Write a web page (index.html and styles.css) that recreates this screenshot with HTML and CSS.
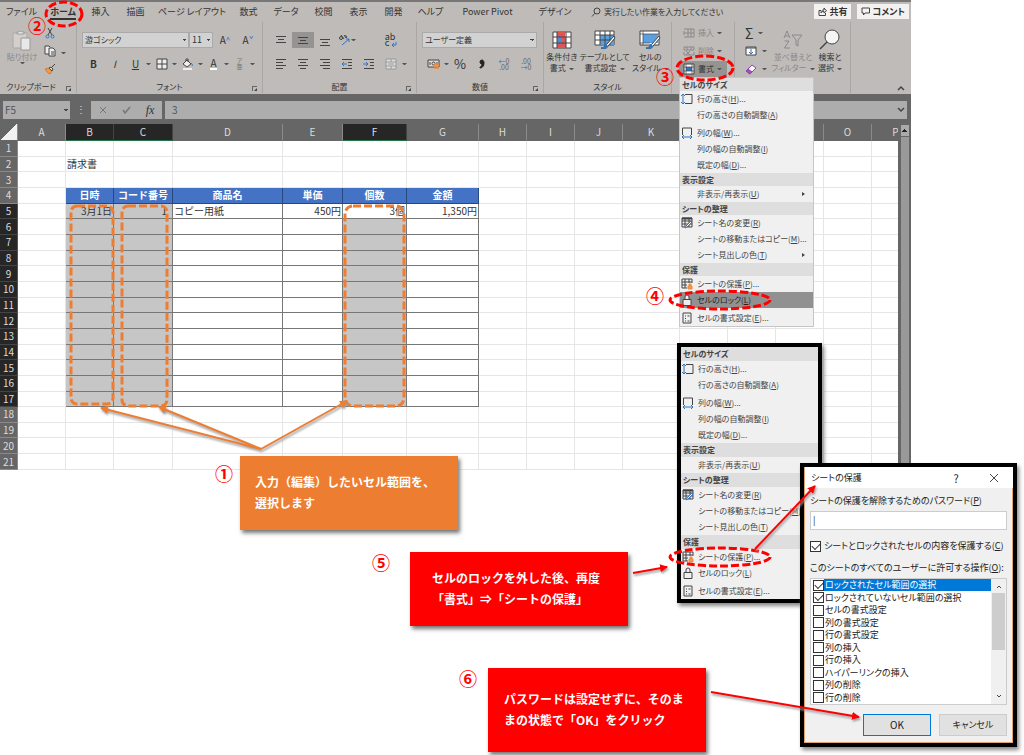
FILE: index.html
```html
<!DOCTYPE html>
<html lang="ja">
  <head>
    <meta charset="UTF-8" />
    <meta name="viewport" content="width=device-width, initial-scale=1.0" />
    <title>シートの保護</title>
    <link rel="stylesheet" href="styles.css">
  </head>
  <body>
    <main class="page">
      <section class="excel">
        <header class="tabs">
          <nav class="tab-list">
            <button type="button">ファイル</button>
            <button type="button" class="active"><span>ホーム</span></button>
            <button type="button">挿入</button>
            <button type="button">描画</button>
            <button type="button">ページ レイアウト</button>
            <button type="button">数式</button>
            <button type="button">データ</button>
            <button type="button">校閲</button>
            <button type="button">表示</button>
            <button type="button">開発</button>
            <button type="button">ヘルプ</button>
            <button type="button">Power Pivot</button>
            <button type="button">デザイン</button>
          </nav>
          <button type="button" class="tell-me">
            <svg width="10" height="10" viewBox="0 0 10 10"><circle cx="6" cy="4" r="3" /><path d="M4 6.2L1 9.5" /></svg>
            実行したい作業を入力してください
          </button>
          <div class="tab-actions">
            <button type="button">
              <svg width="9" height="9" viewBox="0 0 9 9"><path d="M3 3.5H1v5h6.500V6M3 6c0-2 1-3 3-3V1l2.500 2.800L6 6V4.300C4.500 4.300 3.500 5 3 6z" /></svg>
              共有
            </button>
            <button type="button">
              <svg width="9" height="9" viewBox="0 0 9 9"><path d="M1 1h7.500v5H4L2.500 8V6H1z" /></svg>
              コメント
            </button>
          </div>
        </header>

        <div class="ribbon">
          <div class="group clipboard">
            <div class="group-body">
              <button type="button" class="big off">
                <svg width="22" height="22" viewBox="0 0 22 22"><path d="M2 4h14v15H2z" fill="#d2cfcc" stroke="#aaa" /><path d="M6 5V3h2a2 2 0 0 1 3 0h2v2z" fill="#eee" stroke="#999" /><path d="M10 9h9v12h-9z" fill="#e8e8e8" stroke="#999" /></svg>
                <span>貼り付け</span><i class="caret"></i>
              </button>
              <div class="stack">
                <button type="button" class="slot" aria-label="切り取り"><svg width="10" height="12" viewBox="0 0 10 12"><path d="M3 1l4 7M7 1L3 8" /><circle class="blue" cx="2.500" cy="9.500" r="1.500" /><circle class="blue" cx="7.500" cy="9.500" r="1.500" /></svg></button>
                <button type="button" class="slot" aria-label="コピー"><svg width="12" height="12" viewBox="0 0 12 12"><path d="M5 9H1V1h4l1 1M5 3h4l2 2v6H5zM7 7h3M7 9h3" fill="#eee" /></svg></button>
                <button type="button" class="slot" aria-label="書式のコピー"><svg width="12" height="12" viewBox="0 0 12 12"><path d="M1 6l4-1 3 3-2 3-2-1z" fill="#ed9a4c" stroke="#d87b2f" /><path d="M5 5l3 3 1-2-2-2zM8 4l3-3" fill="#ddd" /></svg></button>
              </div>
              <i class="caret"></i>
            </div>
            <div class="group-label">クリップボード<i class="launcher"></i></div>
          </div>

          <div class="group font">
            <div class="group-body rows">
              <div class="row">
                <select class="font-name" aria-label="フォント"><option>游ゴシック</option></select>
                <select class="font-size" aria-label="フォント サイズ"><option>11</option></select>
                <button type="button" class="slot grow">A<sup>^</sup></button>
                <button type="button" class="slot grow">A<sup>ˇ</sup></button>
              </div>
              <div class="row">
                <button type="button" class="slot"><b>B</b></button>
                <button type="button" class="slot"><em>I</em></button>
                <button type="button" class="slot"><u>U</u></button><i class="caret"></i>
                <button type="button" class="slot" aria-label="罫線"><svg width="12" height="12" viewBox="0 0 12 12"><path d="M1 1h10v10H1zM6 1v10M1 6h10" fill="#eee" /></svg></button><i class="caret"></i>
                <button type="button" class="slot" aria-label="塗りつぶし"><svg width="12" height="12" viewBox="0 0 12 12"><path d="M1 6l4-4 4 4-4 3zM4 3V1h2v3" fill="#eee" /><path class="blue" d="M9 5c1 1 2 2 1 3" /><path d="M1 11h9" stroke="#eee" stroke-width="2" /></svg></button><i class="caret"></i>
                <button type="button" class="slot"><span class="font-color">A</span></button><i class="caret"></i>
                <button type="button" class="slot" aria-label="ふりがな"><span class="ruby">ア<br>亜</span></button><i class="caret"></i>
              </div>
            </div>
            <div class="group-label">フォント<i class="launcher"></i></div>
          </div>

          <div class="group align">
            <div class="group-body rows">
              <div class="row">
                <button type="button" class="slot" aria-label="上揃え"><svg width="12" height="12" viewBox="0 0 12 12"><path d="M1 2.500h10M3 5.500h6M1 8.500h10" /></svg></button>
                <button type="button" class="slot pressed" aria-label="上下中央揃え"><svg width="12" height="12" viewBox="0 0 12 12"><path d="M1 3.500h10M3 6.500h6M1 9.500h10" /></svg></button>
                <button type="button" class="slot" aria-label="下揃え"><svg width="12" height="12" viewBox="0 0 12 12"><path d="M1 5.500h10M3 8.500h6M1 11.500h10" /></svg></button>
                <button type="button" class="slot" aria-label="方向"><svg width="13" height="12" viewBox="0 0 13 12"><circle cx="3" cy="4" r="1.500" /><path d="M3 1l3 4M6 1l2 3M7 2c2-1 2 2 1 2" /><path class="blue" d="M4 11l7-6M8 5h3v3" /></svg><i class="caret"></i></button>
                <button type="button" class="slot wrap" aria-label="折り返して全体を表示する"><span class="wrap-text">ab<br>c</span><svg width="6" height="6" viewBox="0 0 6 6"><path class="blue" d="M5 0v3H1M3 1L1 3l2 2" /></svg></button>
              </div>
              <div class="row">
                <button type="button" class="slot" aria-label="左揃え"><svg width="12" height="12" viewBox="0 0 12 12"><path d="M1 1.500h10M1 4.500h7M1 7.500h10M1 10.500h7" /></svg></button>
                <button type="button" class="slot" aria-label="中央揃え"><svg width="12" height="12" viewBox="0 0 12 12"><path d="M1 1.500h10M3 4.500h6M1 7.500h10M3 10.500h6" /></svg></button>
                <button type="button" class="slot" aria-label="右揃え"><svg width="12" height="12" viewBox="0 0 12 12"><path d="M1 1.500h10M4 4.500h7M1 7.500h10M4 10.500h7" /></svg></button>
                <button type="button" class="slot" aria-label="インデントを減らす"><svg width="12" height="12" viewBox="0 0 12 12"><path d="M1 1.500h10M7 4.500h4M7 7.500h4M1 10.500h10" /><path class="blue" d="M6 6H1M3 4L1 6l2 2" /></svg></button>
                <button type="button" class="slot" aria-label="インデントを増やす"><svg width="12" height="12" viewBox="0 0 12 12"><path d="M1 1.500h10M7 4.500h4M7 7.500h4M1 10.500h10" /><path class="blue" d="M0 6h5M3 4l2 2-2 2" /></svg></button>
                <button type="button" class="slot" aria-label="セルを結合して中央揃え"><svg width="12" height="12" viewBox="0 0 12 12"><path d="M1 1h10v10H1zM1 4h10M1 8h10M6 1v3M6 8v3M3 6h6" fill="#ddd" stroke="#999" /></svg></button><i class="caret"></i>
              </div>
            </div>
            <div class="group-label">配置<i class="launcher"></i></div>
          </div>

          <div class="group number">
            <div class="group-body rows">
              <div class="row">
                <select class="number-format" aria-label="数値の書式"><option>ユーザー定義</option></select>
              </div>
              <div class="row">
                <button type="button" class="slot" aria-label="通貨"><svg width="13" height="12" viewBox="0 0 13 12"><path d="M1 2h11v7H1zM3 4v3M10 4v3" fill="#ddd" /><circle cx="6.500" cy="5.500" r="1.500" /><path d="M7 6h5M7 8h5M7 10h5" stroke="#ed8a3c" stroke-width="1.500" /></svg></button><i class="caret"></i>
                <button type="button" class="slot pct">%</button>
                <button type="button" class="slot" aria-label="桁区切りスタイル"><svg width="8" height="12" viewBox="0 0 8 12"><path d="M4 2a2 2 0 1 0 0 4c0 2-1 3-2 3v1c3 0 4-3 4-5 0-2-1-3-2-3z" fill="#222" stroke="#222" /></svg></button>
                <button type="button" class="slot" aria-label="小数点以下の表示桁数を増やす"><span class="digits"><i>←</i>0<br>.00</span></button>
                <button type="button" class="slot" aria-label="小数点以下の表示桁数を減らす"><span class="digits">.00<br><i>→</i>0</span></button>
              </div>
            </div>
            <div class="group-label">数値<i class="launcher"></i></div>
          </div>

          <div class="group styles">
            <div class="group-body">
              <button type="button" class="big">
                <svg width="20" height="18" viewBox="0 0 20 18"><path d="M1 1h18v16H1z" fill="#fff" /><path d="M5 1h8v5H5zM5 12h9v5H5z" fill="#dd5555" stroke="none" /><path d="M5 6h5v6H5z" fill="#4a90d9" stroke="none" /><path d="M10 6h4v6h-4z" fill="#dd5555" stroke="none" /><path d="M5 1v16M14 1v16M1 6h18M1 12h18" /></svg>
                <span>条件付き<br>書式<i class="caret"></i></span>
              </button>
              <button type="button" class="big">
                <svg width="22" height="20" viewBox="0 0 22 20"><path d="M1 1h19v14H1z" fill="#fff" /><path d="M6 5h14v10H6z" fill="#5aa0e0" stroke="none" /><path d="M1 5h19M1 10h19M6 1v14M11 1v14M16 1v14" /><path d="M20 6l-7 8-2 1c0 2-2 3-4 3 2 1 6 1 7-2l7-8z" fill="#fff" /><path d="M12 14c-2 1-2 4-5 4 3 2 6 1 7-2z" fill="#2f75c0" stroke="none" /></svg>
                <span>テーブルとして<br>書式設定<i class="caret"></i></span>
              </button>
              <button type="button" class="big">
                <svg width="22" height="20" viewBox="0 0 22 20"><path d="M1 1h19v14H1z" fill="#fff" /><path d="M4 4h15v9H4z" fill="#5aa0e0" stroke="none" /><path d="M4 1v14M1 4h19M1 13h10" stroke-width=".7" /><path d="M20 6l-7 8-2 1c0 2-2 3-4 3 2 1 6 1 7-2l7-8z" fill="#fff" /><path d="M12 14c-2 1-2 4-5 4 3 2 6 1 7-2z" fill="#2f75c0" stroke="none" /></svg>
                <span>セルの<br>スタイル<i class="caret"></i></span>
              </button>
            </div>
            <div class="group-label">スタイル</div>
          </div>

          <div class="group cells">
            <div class="group-body stack">
              <button type="button" class="cell-btn off"><svg width="12" height="10" viewBox="0 0 12 10"><path d="M5 1h6v8H5zM1 1h4M1 9h4M1 3v4M5 5h6M8 1v8M1 5h4" /></svg>挿入<i class="caret"></i></button>
              <button type="button" class="cell-btn off"><svg width="12" height="10" viewBox="0 0 12 10"><path d="M1 1h10v3H1zM1 9h10V6M1 6v3M4 1v3M8 1v3M3 5l4 4M7 5L3 9" /></svg>削除<i class="caret"></i></button>
              <button type="button" class="cell-btn pressed"><svg width="12" height="12" viewBox="0 0 12 12"><path d="M1 1h10v10H1z" fill="#fff" /><path d="M3 4h6v4H3z" fill="#2f75c0" stroke="none" /><path d="M3 1v10M9 1v10M1 4h10M1 8h10" stroke-width=".7" /></svg>書式<i class="caret"></i></button>
            </div>
          </div>

          <div class="group editing">
            <div class="group-body">
              <div class="stack">
                <button type="button" class="edit-btn"><span class="sigma">Σ</span><i class="caret"></i></button>
                <button type="button" class="edit-btn" aria-label="フィル"><svg width="12" height="10" viewBox="0 0 12 10"><path d="M1 1h10v8H1z" fill="#fff" /><path d="M1 2h10" /><path class="blue" d="M6 3v5M4 6l2 2 2-2" /></svg><i class="caret"></i></button>
                <button type="button" class="edit-btn" aria-label="クリア"><svg width="12" height="11" viewBox="0 0 12 11"><path d="M1 7l6-6 4 3-6 6z" fill="#fff" stroke="#9040b0" /><path d="M1 7l2-2 4 3-2 2z" fill="#a050c0" stroke="#9040b0" /></svg><i class="caret"></i></button>
              </div>
              <button type="button" class="big off">
                <svg width="20" height="20" viewBox="0 0 20 20"><path d="M1 8l3-7 3 7M2 6h4M1.500 11H6l-4.500 7H7M9 5h10l-4 5v6l-2-1v-5z" /></svg>
                <span>並べ替えと<br>フィルター<i class="caret"></i></span>
              </button>
              <button type="button" class="big find">
                <svg width="22" height="22" viewBox="0 0 22 22"><circle cx="13" cy="8" r="7" fill="#f4f4f4" /><path d="M8 13l-7 7" stroke-width="1.500" /></svg>
                <span>検索と<br>選択<i class="caret"></i></span>
              </button>
            </div>
          </div>
          <button type="button" class="collapse" aria-label="リボンを折りたたむ"><svg width="8" height="6" viewBox="0 0 8 6"><path d="M1 5l3-3 3 3" stroke-width="1.500" /></svg></button>
        </div>

        <div class="formula-bar">
          <select class="name-box" aria-label="名前ボックス"><option>F5</option></select>
          <span class="grip">⋮</span>
          <div class="fx-buttons">
            <button type="button" aria-label="キャンセル"><svg width="8" height="8" viewBox="0 0 8 8"><path d="M1 1l6 6M7 1L1 7" stroke="#777" /></svg></button>
            <button type="button" aria-label="入力"><svg width="9" height="8" viewBox="0 0 9 8"><path d="M1 4l2 3 5-6" stroke="#777" stroke-width="1.500" /></svg></button>
            <button type="button" class="fx">fx</button>
          </div>
          <div class="fx-input">
            <input type="text" value="3" aria-label="数式バー" />
            <svg width="8" height="6" viewBox="0 0 8 6"><path d="M1 1l3 3 3-3" stroke-width="1.500" /></svg>
          </div>
        </div>

        <div class="sheet">
          <div class="grid-wrap">
            <table class="grid">
              <colgroup>
                <col class="w-head"><col class="w-m"><col class="w-m"><col class="w-c"><col class="w-d"><col class="w-e"><col class="w-f"><col class="w-g"><col class="w-m"><col class="w-m"><col class="w-m"><col class="w-k"><col class="w-m"><col class="w-m"><col class="w-m"><col class="w-m"><col class="w-m">
              </colgroup>
              <thead><tr id="col-heads"></tr></thead>
              <tbody id="cells"></tbody>
            </table>
          </div>
          <div class="scrollbar"><i></i></div>
        </div>
      </section>

      <ul class="menu open-menu">
        <li class="title">セルのサイズ</li>
        <li><button type="button"><svg width="12" height="12" viewBox="0 0 12 12"><path d="M4 1.500h7v9H4" /><path class="blue" d="M2 1v10M0 3l2-2 2 2M0 9l2 2 2-2" /></svg>行の高さ(<u>H</u>)...</button></li>
        <li class="sep"><button type="button">行の高さの自動調整(<u>A</u>)</button></li>
        <li><button type="button"><svg width="12" height="12" viewBox="0 0 12 12"><path d="M1.500 8V1h9v7" /><path class="blue" d="M1 10h10M3 8l-2 2 2 2M9 8l2 2-2 2" /></svg>列の幅(<u>W</u>)...</button></li>
        <li><button type="button">列の幅の自動調整(<u>I</u>)</button></li>
        <li><button type="button">既定の幅(<u>D</u>)...</button></li>
        <li class="title">表示設定</li>
        <li class="sub"><button type="button">非表示/再表示(<u>U</u>)</button></li>
        <li class="title">シートの整理</li>
        <li><button type="button"><svg width="12" height="12" viewBox="0 0 12 12"><path d="M1 1h10v9H1zM1 4h10M1 7h10M4 1v9M8 1v9" /><path d="M1 1.500h10" stroke-width="2" /><path d="M4 11l1-2 5-5 1 1-5 5z" fill="#fff" stroke="#3f74c4" /></svg>シート名の変更(<u>R</u>)</button></li>
        <li><button type="button">シートの移動またはコピー(<u>M</u>)...</button></li>
        <li class="sub"><button type="button">シート見出しの色(<u>T</u>)</button></li>
        <li class="title">保護</li>
        <li><button type="button"><svg width="12" height="12" viewBox="0 0 12 12"><path d="M6 10H1V1h10v4M1 4h10M1 7h5M4 1v9M8 1v4" /><path d="M7 8h4v3H7zM8 8V6h2v2" fill="#ed9a4c" stroke="#ed8a3c" /></svg>シートの保護(<u>P</u>)...</button></li>
        <li class="sep current"><button type="button"><svg width="12" height="12" viewBox="0 0 12 12"><path d="M2 5.500h8v6H2zM4 5V3a2 2 0 0 1 4 0v2" fill="#eee" /></svg>セルのロック(<u>L</u>)</button></li>
        <li><button type="button"><svg width="12" height="12" viewBox="0 0 12 12"><path d="M2 1h8v10H2zM4 4h1M4 6.500h1M4 9h1M6.500 4h2M6.500 9h2" /></svg>セルの書式設定(<u>E</u>)...</button></li>
      </ul>

      <ul class="menu framed-menu">
        <li class="title">セルのサイズ</li>
        <li><button type="button"><svg width="12" height="12" viewBox="0 0 12 12"><path d="M4 1.500h7v9H4" /><path class="blue" d="M2 1v10M0 3l2-2 2 2M0 9l2 2 2-2" /></svg>行の高さ(<u>H</u>)...</button></li>
        <li class="sep"><button type="button">行の高さの自動調整(<u>A</u>)</button></li>
        <li><button type="button"><svg width="12" height="12" viewBox="0 0 12 12"><path d="M1.500 8V1h9v7" /><path class="blue" d="M1 10h10M3 8l-2 2 2 2M9 8l2 2-2 2" /></svg>列の幅(<u>W</u>)...</button></li>
        <li><button type="button">列の幅の自動調整(<u>I</u>)</button></li>
        <li><button type="button">既定の幅(<u>D</u>)...</button></li>
        <li class="title">表示設定</li>
        <li><button type="button">非表示/再表示(<u>U</u>)</button></li>
        <li class="title">シートの整理</li>
        <li><button type="button"><svg width="12" height="12" viewBox="0 0 12 12"><path d="M1 1h10v9H1zM1 4h10M1 7h10M4 1v9M8 1v9" /><path d="M1 1.500h10" stroke-width="2" /><path d="M4 11l1-2 5-5 1 1-5 5z" fill="#fff" stroke="#3f74c4" /></svg>シート名の変更(<u>R</u>)</button></li>
        <li><button type="button">シートの移動またはコピー(<u>M</u>)...</button></li>
        <li><button type="button">シート見出しの色(<u>T</u>)</button></li>
        <li class="title">保護</li>
        <li><button type="button"><svg width="12" height="12" viewBox="0 0 12 12"><path d="M6 10H1V1h10v4M1 4h10M1 7h5M4 1v9M8 1v4" /><path d="M7 8h4v3H7zM8 8V6h2v2" fill="#ed9a4c" stroke="#ed8a3c" /></svg>シートの保護(<u>P</u>)...</button></li>
        <li class="sep"><button type="button"><svg width="12" height="12" viewBox="0 0 12 12"><path d="M2 5.500h8v6H2zM4 5V3a2 2 0 0 1 4 0v2" fill="#eee" /></svg>セルのロック(<u>L</u>)</button></li>
        <li><button type="button"><svg width="12" height="12" viewBox="0 0 12 12"><path d="M2 1h8v10H2zM4 4h1M4 6.500h1M4 9h1M6.500 4h2M6.500 9h2" /></svg>セルの書式設定(<u>E</u>)...</button></li>
      </ul>

      <form class="dialog">
        <div class="dialog-title">
          <span>シートの保護</span>
          <button type="button">?</button>
          <button type="button" aria-label="閉じる"><svg width="10" height="10" viewBox="0 0 10 10"><path d="M1 1l8 8M9 1L1 9" /></svg></button>
        </div>
        <div class="dialog-body">
          <label for="password">シートの保護を解除するためのパスワード(<u>P</u>)</label>
          <input id="password" class="password" type="text" value="|" />
          <label class="check"><input type="checkbox" checked />シートとロックされたセルの内容を保護する(<u>C</u>)</label>
          <p>このシートのすべてのユーザーに許可する操作(<u>O</u>):</p>
          <div class="perm-box">
            <div class="perms">
              <label class="chosen"><input type="checkbox" checked /><span>ロックされたセル範囲の選択</span></label>
              <label><input type="checkbox" checked /><span>ロックされていないセル範囲の選択</span></label>
              <label><input type="checkbox" /><span>セルの書式設定</span></label>
              <label><input type="checkbox" /><span>列の書式設定</span></label>
              <label><input type="checkbox" /><span>行の書式設定</span></label>
              <label><input type="checkbox" /><span>列の挿入</span></label>
              <label><input type="checkbox" /><span>行の挿入</span></label>
              <label><input type="checkbox" /><span>ハイパーリンクの挿入</span></label>
              <label><input type="checkbox" /><span>列の削除</span></label>
              <label><input type="checkbox" /><span>行の削除</span></label>
            </div>
            <div class="perm-scroll">
              <svg width="6" height="4" viewBox="0 0 6 4"><path d="M1 3l2-2 2 2" /></svg>
              <i></i>
              <svg width="6" height="4" viewBox="0 0 6 4"><path d="M1 1l2 2 2-2" /></svg>
            </div>
          </div>
          <div class="dialog-buttons">
            <button type="button" class="default">OK</button>
            <button type="button">キャンセル</button>
          </div>
        </div>
      </form>

      <p class="callout note1">入力（編集）したいセル範囲を、<br>選択します</p>
      <p class="callout note5">セルのロックを外した後、再度<br>「書式」⇒「シートの保護」</p>
      <p class="callout note6">パスワードは設定せずに、そのま<br>まの状態で「OK」をクリック</p>

      <svg class="marks" width="1024" height="755" viewBox="0 0 1024 755">
        <defs>
          <marker id="head-o" viewBox="0 0 8 8" refX="7" refY="4" markerWidth="8" markerHeight="8" markerUnits="userSpaceOnUse" orient="auto"><path d="M0 0l8 4-8 4z" fill="#ed7d31" /></marker>
          <marker id="head-r" viewBox="0 0 8 8" refX="7" refY="4" markerWidth="8" markerHeight="8" markerUnits="userSpaceOnUse" orient="auto"><path d="M0 0l8 4-8 4z" fill="#f00" /></marker>
        </defs>
        <g class="ranges">
          <rect x="71" y="206" width="42" height="198" rx="6" />
          <rect x="122" y="206" width="45" height="200" rx="6" />
          <rect x="345" y="206" width="59" height="200" rx="8" />
        </g>
        <g class="orange-lines">
          <path d="M261 449L101 408" marker-end="url(#head-o)" />
          <path d="M261 449L159 407" marker-end="url(#head-o)" />
          <path d="M261 449L347 401" marker-end="url(#head-o)" />
        </g>
        <g class="rings">
          <ellipse cx="64" cy="14" rx="18" ry="12" />
          <ellipse cx="705" cy="68" rx="28" ry="12" />
          <ellipse cx="720" cy="300" rx="50" ry="9" />
          <ellipse cx="720" cy="557" rx="50" ry="9" />
        </g>
        <g class="red-lines">
          <path d="M633 573L667 567" marker-end="url(#head-r)" />
          <path d="M755 549L815 486" marker-end="url(#head-r)" />
          <path d="M711 692L859 717" marker-end="url(#head-r)" />
        </g>
      </svg>
      <b class="step s1">①</b>
      <b class="step s2">②</b>
      <b class="step s3">③</b>
      <b class="step s4">④</b>
      <b class="step s5">⑤</b>
      <b class="step s6">⑥</b>
    </main>
    <script src="script.js"></script>
  </body>
</html>
```

FILE: styles.css
```css
* {
  box-sizing: border-box;
}

body {
  margin: 0;
  background: #fff;
  color: #333;
  font-family: "Noto Sans CJK JP", "Noto Sans", sans-serif;
  font-size: 9px;
  line-height: 12px;
}

button,
input,
select {
  margin: 0;
  padding: 0;
  border: 0;
  background: none;
  color: inherit;
  font: inherit;
  font-feature-settings: "palt";
}

p,
ul {
  margin: 0;
  padding: 0;
}

svg {
  flex: none;
  fill: none;
  stroke: #444;
  stroke-width: 1;
}

.blue {
  stroke: #2f75c8;
}

.page {
  position: relative;
  min-height: 755px;
  overflow: hidden;
}

/* excel window */
.excel {
  margin-right: 113px;
  background: #666;
}

.tabs {
  display: flex;
  height: 22px;
  border-top: 2px solid #777;
  background: #bfbbb8;
}

.tab-list {
  display: grid;
  grid-template-columns: 43px 40px 35px 35px 78px 35px 40px 35px 35px 35px 39px 75px 60px;
}

.tab-list button {
  white-space: nowrap;
}

.tab-list .active {
  font-weight: bold;
}

.active span {
  border-bottom: 2px solid #333;
}

.tell-me {
  display: flex;
  align-items: center;
  gap: 3px;
  margin-left: 6px;
  font-size: 8px;
  white-space: nowrap;
}

.tab-actions {
  display: flex;
  gap: 6px;
  margin: 2px 2px 3px auto;
}

.tab-actions button {
  display: flex;
  align-items: center;
  gap: 2px;
  padding: 0 4px;
  background: #f3f2f1;
  font-weight: bold;
}

.ribbon {
  display: flex;
  height: 72px;
  background: #bfbbb8;
  font-size: 8px;
}

.group {
  display: flex;
  flex: none;
  flex-direction: column;
  margin-bottom: 1px;
  border-right: 1px solid #a9a6a3;
}

.group-body {
  display: flex;
  flex: 1;
}

.rows {
  flex-direction: column;
  gap: 8px;
  padding-top: 10px;
}

.row {
  display: flex;
  align-items: center;
  height: 16px;
}

.stack {
  display: flex;
  flex-direction: column;
  gap: 2px;
  padding-top: 3px;
}

.group-label {
  position: relative;
  height: 12px;
  text-align: center;
  font-feature-settings: "palt";
}

.launcher {
  position: absolute;
  right: 5px;
  bottom: 2px;
  width: 5px;
  height: 5px;
  border-top: 1px solid #666;
  border-left: 1px solid #666;
}

.launcher::after {
  content: "";
  position: absolute;
  right: 0;
  bottom: 0;
  border-bottom: 3px solid #444;
  border-left: 3px solid transparent;
}

.caret {
  flex: none;
  width: 5px;
  height: 2px;
  border-top: 2px solid #555;
  border-right: 2px solid transparent;
  border-left: 2px solid transparent;
}

.slot {
  display: flex;
  flex: none;
  align-items: center;
  justify-content: center;
  width: 22px;
  height: 16px;
}

.pressed {
  background: #969492;
}

.off {
  color: #888;
}

.off svg {
  stroke: #8a8a8a;
}

.big {
  display: flex;
  flex: none;
  flex-direction: column;
  align-items: center;
  padding-top: 7px;
  line-height: 11px;
  white-space: nowrap;
}

.big svg {
  height: 22px;
}

.big span .caret {
  display: inline-block;
  margin-left: 3px;
  vertical-align: middle;
}

.clipboard {
  width: 77px;
}

.clipboard .big {
  width: 44px;
}

.clipboard .stack .slot {
  width: 12px;
}

.clipboard .group-body > .caret {
  margin: 30px 0 0 5px;
}

.clipboard .group-label {
  padding-right: 14px;
}

.font {
  width: 186px;
}

.font .row {
  padding-left: 6px;
}

.font .slot {
  width: 21px;
  font-size: 10px;
}

.font .row:first-child {
  padding-left: 5px;
}

.font .grow {
  width: 22px;
  margin-left: 1px;
}

.grow sup {
  color: #2f75c8;
  font-size: 8px;
  line-height: 8px;
}

.font-color {
  border-bottom: 2px solid #fff;
  line-height: 10px;
}

.ruby {
  color: #777;
  font-size: 6px;
  line-height: 6px;
}

.group select {
  height: 16px;
  border: 1px solid #aaa;
  background: #d2d2d2;
}

select {
  padding-left: 2px;
  appearance: none;
}

.group select,
.formula-bar select {
  background-image: conic-gradient(from 315deg at 50% 100%, #444 90deg, transparent 0);
  background-position: right 2px center;
  background-repeat: no-repeat;
  background-size: 4px 2px;
}

.font-name {
  width: 107px;
}

.group .font-size {
  width: 24px;
  font-size: 9px;
}

.align {
  width: 154px;
}

.align .row {
  padding-left: 7px;
}

.align .wrap {
  margin-left: 22px;
}

.wrap-text {
  font-size: 9px;
  line-height: 6px;
  text-align: left;
}

.wrap svg {
  align-self: flex-end;
  margin-left: -4px;
}

.number {
  width: 127px;
}

.number .row {
  padding-left: 5px;
}

.number-format {
  width: 115px;
}

.pct {
  font-size: 13px;
}

.digits {
  color: #666;
  font-size: 7px;
  line-height: 6px;
}

.digits i {
  color: #2f75c8;
  font-style: normal;
}

.styles {
  width: 128px;
}

.styles .group-body {
  justify-content: space-evenly;
}

.cells {
  width: 63px;
  padding-left: 7px;
}

.cell-btn {
  display: flex;
  align-items: center;
  gap: 3px;
  width: 48px;
  height: 16px;
  padding-left: 4px;
}

.editing {
  width: 116px;
}

.editing .stack {
  width: 36px;
}

.edit-btn {
  display: flex;
  align-items: center;
  gap: 5px;
  height: 16px;
  padding-left: 10px;
}

.sigma {
  font-size: 14px;
}

.editing .big {
  width: 44px;
}

.editing .find {
  width: 30px;
}

.collapse {
  display: flex;
  align-self: flex-end;
  margin: 0 6px 3px auto;
}

.formula-bar {
  display: flex;
  height: 30px;
  padding: 7px 4px 5px 3px;
  color: #555;
  font-size: 10px;
}

.name-box {
  width: 67px;
  background-color: #adadad;
}

.grip {
  width: 21px;
  color: #ddd;
  line-height: 16px;
  text-align: center;
}

.fx-buttons {
  display: flex;
  align-items: center;
  justify-content: space-around;
  width: 71px;
  background: #adadad;
}

.fx {
  color: #333;
  font-family: "Liberation Serif", serif;
  font-size: 12px;
  font-style: italic;
}

.fx-input {
  display: flex;
  flex: 1;
  align-items: center;
  margin-left: 3px;
  padding: 0 2px 0 7px;
  background: #adadad;
}

.fx-input input {
  flex: 1;
}

/* worksheet */
.sheet {
  display: flex;
}

.grid-wrap {
  flex: 1;
  min-width: 0;
  overflow: hidden;
  background: #fff;
}

.grid {
  width: 919px;
  height: 346px;
  border-spacing: 0;
  table-layout: fixed;
  font-size: 10px;
  line-height: 12px;
}

.grid thead tr {
  height: 17px;
}

.w-head { width: 18px; }
.w-m { width: 48px; }
.w-c { width: 59px; }
.w-d { width: 110px; }
.w-e { width: 60px; }
.w-f { width: 64px; }
.w-g { width: 72px; }
.w-k { width: 57px; }

.grid th,
.grid td {
  padding: 0 1px;
  border-right: 1px solid #e6e6e6;
  border-bottom: 1px solid #e6e6e6;
  white-space: nowrap;
}

.grid td {
  text-align: left;
}

.grid th {
  border-color: #8a8a8a;
  background: #666;
  color: #ddd;
  font-weight: normal;
}

.grid thead th {
  border-bottom-color: #666;
}

.grid th.sel {
  border-color: #444;
  background: #262626;
}

.grid thead th.sel {
  border-bottom-color: #217346;
}

.grid tbody th.sel {
  border-right-color: #217346;
}

.grid .corner {
  background: linear-gradient(135deg, #666 50%, #f2f2f2 50%);
}

.grid td.title-cell {
  border-color: #27477f;
  background: #4472c4;
  color: #fff;
  font-weight: bold;
  text-align: center;
}

.grid td.box {
  border-color: #777;
}

.grid td.fill {
  background: #c6c6c6;
}

.grid td.num {
  text-align: right;
}

.grid td.code {
  padding-right: 5px;
}

.scrollbar {
  width: 13px;
  border-right: 2px solid #666;
  border-left: 3px solid #666;
  background: #999;
}

.scrollbar i {
  display: block;
  height: 13px;
  border: solid #666;
  border-width: 1px 0;
  background: conic-gradient(from 135deg at 50% 0, #222 90deg, transparent 0) center / 6px 3px no-repeat #aaa;
}

/* format menus */
.menu {
  position: absolute;
  background: #f0f0f0;
  color: #444;
  font-size: 8px;
  list-style: none;
  font-feature-settings: "palt";
}

.menu .title {
  height: 13px;
  padding-left: 2px;
  background: #dedede;
  font-weight: bold;
  line-height: 13px;
}

.menu button {
  display: block;
  position: relative;
  width: 100%;
  height: 16px;
  padding-left: 17px;
  text-align: left;
  white-space: nowrap;
}

.menu svg {
  position: absolute;
  top: 2px;
  left: 1px;
}

.menu .sep {
  margin-bottom: 2px;
}

.menu .sub button::after {
  content: "";
  position: absolute;
  top: 6px;
  right: 6px;
  border: 2px solid transparent;
  border-left: 3px solid #444;
}

.menu .current {
  background: #919191;
  color: #222;
}

.open-menu {
  top: 77px;
  left: 679px;
  width: 135px;
  border: 1px solid #c6c6c6;
}

.framed-menu {
  top: 343px;
  left: 677px;
  width: 145px;
  border: 4px solid #000;
  box-shadow: 2px 3px 4px #888;
}

.framed-menu .title {
  height: 14px;
}

/* protect sheet dialog */
.dialog {
  position: absolute;
  top: 463px;
  left: 800px;
  width: 217px;
  border: 4px solid #000;
  background: #f0f0f0;
  box-shadow: 2px 3px 4px #888;
  color: #222;
  font-size: 9px;
  font-feature-settings: "palt";
}

.dialog-title {
  display: flex;
  align-items: center;
  height: 21px;
  padding-left: 6px;
  border-left: 1px solid #e0a070;
  background: #fff;
}

.dialog-title span {
  flex: 1;
}

.dialog-title button {
  width: 38px;
  font-size: 11px;
}

.dialog-body {
  padding: 7px 5px 6px;
  border: solid #e0a070;
  border-width: 0 1px 1px;
}

.dialog-body > label,
.dialog-body > p {
  display: block;
  white-space: nowrap;
}

.password {
  display: block;
  width: 100%;
  height: 19px;
  margin: 4px 0 10px;
  padding-left: 2px;
  border: 1px solid #ccc;
  background: #fff;
}

.dialog-body > .check {
  display: flex;
  align-items: center;
  margin-bottom: 10px;
}

.dialog input[type="checkbox"] {
  flex: none;
  width: 11px;
  height: 11px;
  margin: 0;
  border: 1px solid #333;
  background: #fff;
  appearance: none;
}

.dialog input[type="checkbox"]:checked::after {
  content: "";
  display: block;
  width: 7px;
  height: 4px;
  margin: 1px;
  border: solid #333;
  border-width: 0 0 1px 1px;
  transform: rotate(-45deg);
}

.dialog .check input[type="checkbox"] {
  margin-right: 3px;
}

.perm-box {
  display: flex;
  height: 127px;
  margin-top: 4px;
  border: 1px solid #ccc;
  background: #fff;
}

.perms {
  display: grid;
  flex: 1;
  grid-template-rows: repeat(10, 1fr);
  padding-left: 2px;
}

.perms label {
  display: flex;
  align-items: center;
  white-space: nowrap;
}

.perms span {
  flex: 1;
  padding-left: 1px;
}

.perms .chosen span {
  background: #0078d7;
  color: #fff;
}

.perm-scroll {
  display: flex;
  flex-direction: column;
  align-items: center;
  width: 15px;
  padding: 6px 0;
  background: #f0f0f0;
}

.perm-scroll i {
  width: 13px;
  height: 57px;
  margin: 4px 0 auto;
  background: #cdcdcd;
}

.dialog-buttons {
  display: flex;
  justify-content: flex-end;
  gap: 8px;
  margin-top: 9px;
}

.dialog-buttons button {
  width: 68px;
  height: 22px;
  border: 1px solid #ccc;
  background: #e1e1e1;
}

.dialog-buttons .default {
  border-color: #0078d7;
  font-size: 10px;
}

/* notes drawn over the window */
.callout {
  position: absolute;
  width: 218px;
  box-shadow: 2px 3px 4px #777;
  color: #fff;
  font-size: 12px;
  font-weight: bold;
  line-height: 21px;
  white-space: nowrap;
}

.note1 {
  top: 456px;
  left: 240px;
  padding: 15px 15px 17px;
  background: #ed7d31;
}

.note5 {
  top: 552px;
  left: 410px;
  padding: 15px 22px 17px;
  background: #f00;
}

.note6 {
  top: 668px;
  left: 488px;
  padding: 20px 16px 22px;
  background: #f00;
}

.marks {
  position: absolute;
  top: 0;
  left: 0;
  pointer-events: none;
}

.ranges {
  stroke: #ed7d31;
  stroke-width: 3;
  stroke-dasharray: 8 3;
}

.orange-lines {
  stroke: #ed7d31;
  stroke-width: 2;
  filter: drop-shadow(1px 2px 1px #999);
}

.rings {
  stroke: #f00;
  stroke-width: 3;
  stroke-dasharray: 8 3;
}

.red-lines {
  stroke: #f00;
  stroke-width: 2;
  filter: drop-shadow(1px 2px 1px #999);
}

.marks marker path {
  stroke: none;
}

.step {
  position: absolute;
  width: 20px;
  color: #f00;
  font-size: 18px;
  line-height: 20px;
  text-align: center;
}

.s1 { top: 463px; left: 214px; }
.s2 { top: 15px; left: 27px; }
.s3 { top: 66px; left: 655px; }
.s4 { top: 285px; left: 645px; }
.s5 { top: 552px; left: 371px; }
.s6 { top: 668px; left: 458px; }
```

FILE: script.js
```js
const columns = "ABCDEFGHIJKLMNOP".split("");
const selected = ["B", "C", "F"];
const values = {
  B2: "請求書",
  B4: "日時", C4: "コード番号", D4: "商品名", E4: "単価", F4: "個数", G4: "金額",
  B5: "3月1日", C5: "1", D5: "コピー用紙", E5: "450円", F5: "3個", G5: "1,350円"
};

let heads = '<th class="corner"></th>';
columns.forEach((col) => {
  heads += `<th class="${selected.includes(col) ? "sel" : ""}">${col}</th>`;
});
document.getElementById("col-heads").innerHTML = heads;

let body = "";
for (let row = 1; row <= 21; row++) {
  const inList = row >= 5 && row <= 17;
  body += `<tr><th class="${inList ? "sel" : ""}">${row}</th>`;
  columns.forEach((col) => {
    const classes = [];
    const inTable = col >= "B" && col <= "G";
    if (inTable && row === 4) classes.push("title-cell");
    if (inTable && inList) {
      classes.push("box");
      // F5 is the active cell, so it stays white
      if (selected.includes(col) && col + row !== "F5") classes.push("fill");
      if (col !== "D") classes.push("num");
      if (col === "C") classes.push("code");
    }
    body += `<td class="${classes.join(" ")}">${values[col + row] || ""}</td>`;
  });
  body += "</tr>";
}
document.getElementById("cells").innerHTML = body;
```
